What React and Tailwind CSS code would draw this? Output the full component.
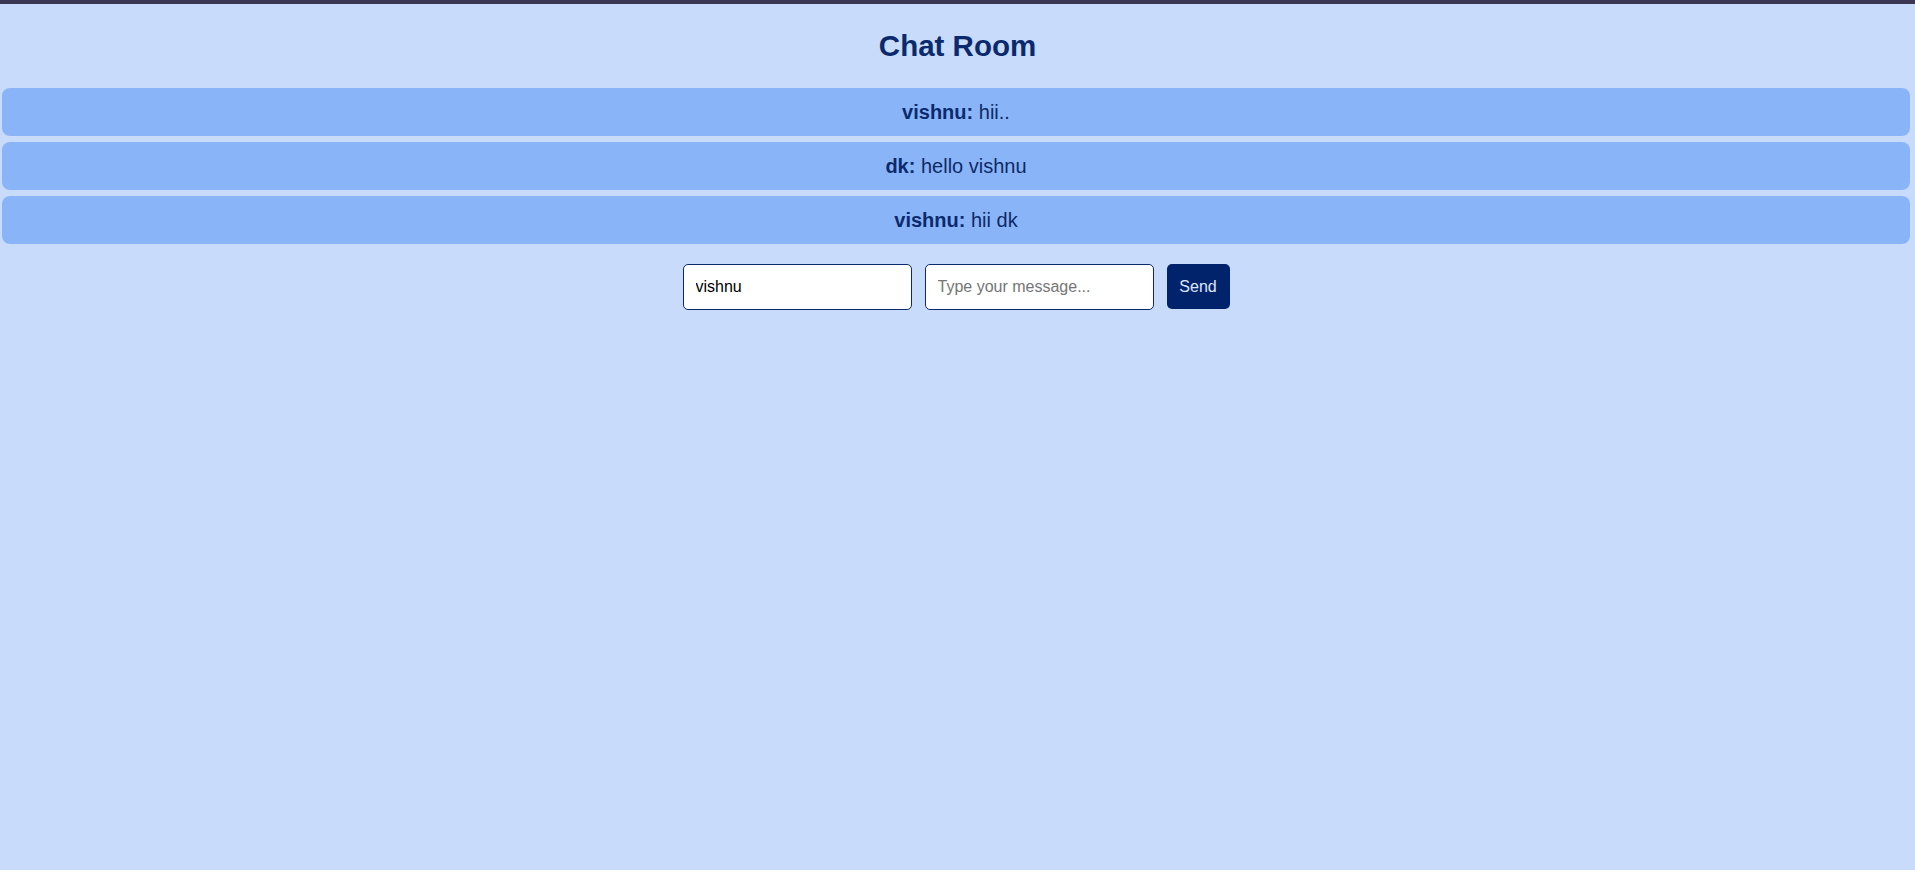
import React from "react";

const messages = [
  { user: "vishnu", text: "hii.." },
  { user: "dk", text: "hello vishnu" },
  { user: "vishnu", text: "hii dk" },
];

export default function App() {
  return (
    <div
      className="min-h-[870px] w-full bg-[#c8dbfb]"
      style={{ fontFamily: '"Liberation Sans", Arial, sans-serif' }}
    >
      <div className="h-[4px] w-full bg-[#3d3652]" />
      <h1 className="pt-[25px] text-center text-[29.5px] font-bold leading-[34px] text-[#0b2a6e]">
        Chat Room
      </h1>
      <div className="mt-[25px] flex flex-col gap-[6px] pl-[2px] pr-[5px]">
        {messages.map((m, i) => (
          <div
            key={i}
            className="flex h-[48px] items-center justify-center rounded-lg bg-[#8ab4f8] text-[20px] text-[#0d2a66]"
          >
            <span className="font-bold text-[#0b2a6e]">{m.user}:</span>
            <span>&nbsp;{m.text}</span>
          </div>
        ))}
      </div>
      <div className="mt-[20px] flex items-start justify-center gap-[13px] pr-[3px]">
        <input
          defaultValue="vishnu"
          className="h-[46px] w-[229px] rounded-[5px] border border-[#0b2a6e] bg-white px-[12px] text-[16px] text-black outline-none"
        />
        <input
          placeholder="Type your message..."
          className="h-[46px] w-[229px] rounded-[5px] border border-[#0b2a6e] bg-white px-[12px] text-[16px] text-black outline-none placeholder:text-[#757575]"
        />
        <button className="h-[45px] w-[63px] rounded-[5px] bg-[#00236b] text-[16px] text-[#dfe8ff]">
          Send
        </button>
      </div>
    </div>
  );
}
